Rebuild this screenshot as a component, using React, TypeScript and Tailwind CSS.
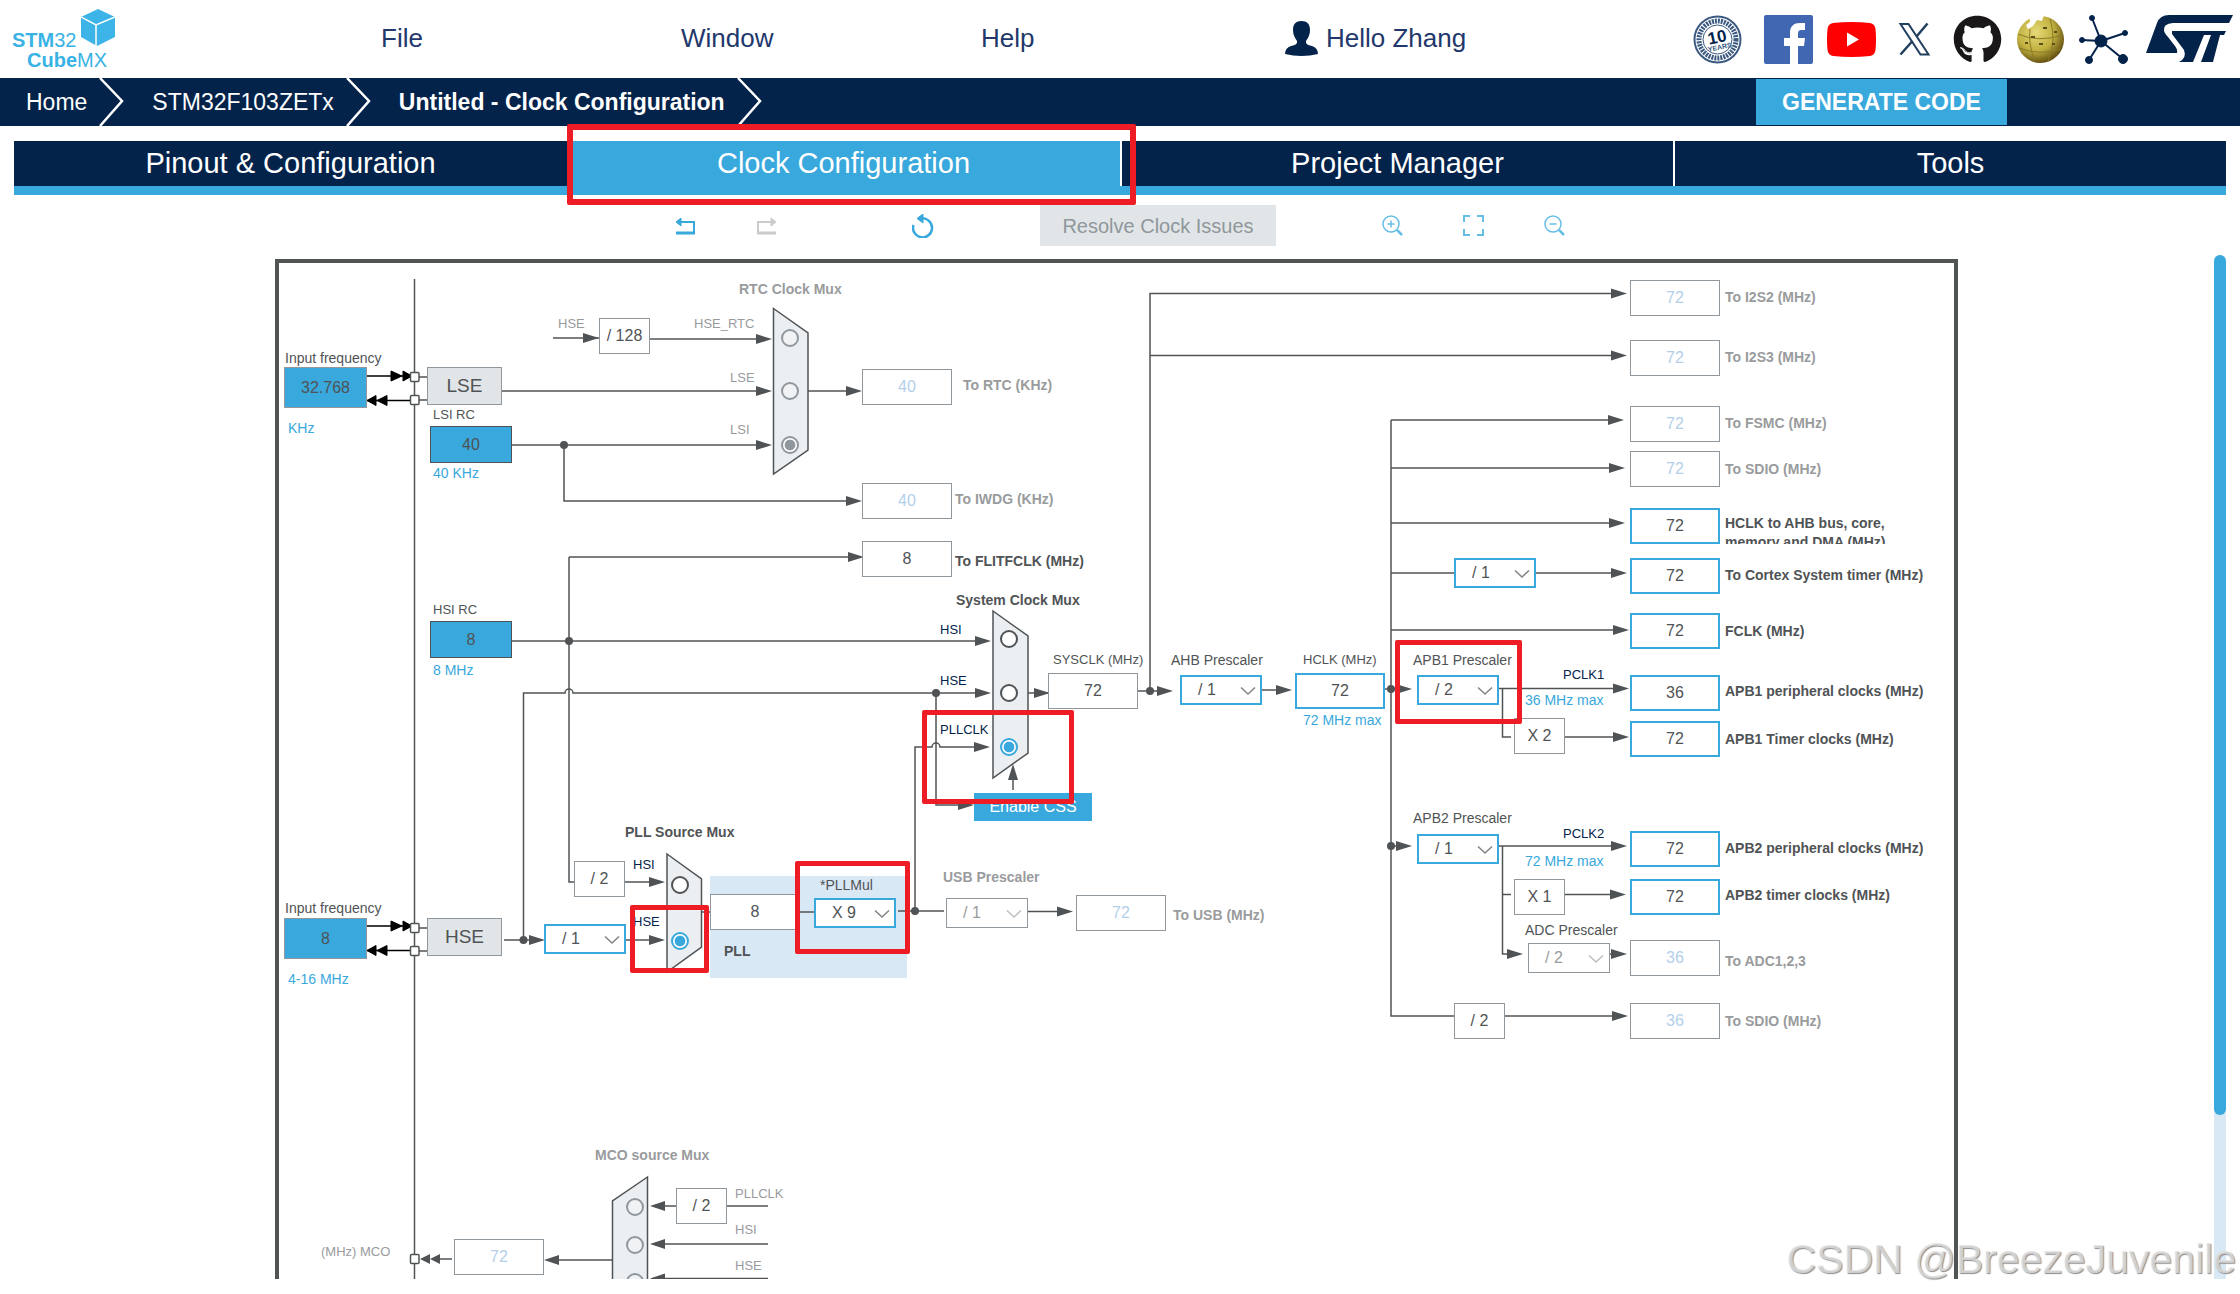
import { useState } from "react";
import { FaGithub } from "react-icons/fa";
import clsx from "clsx";

type Tone = "dark" | "muted" | "blue" | "navy";

interface TextNode {
  x: number;
  y: number; // vertical centre of the line
  text: string;
  tone?: Tone;
  bold?: boolean;
  small?: boolean;
  forId?: string;
}

interface ValueNode {
  id: string;
  x: number;
  y: number;
  value: string;
  kind: "active" | "plain" | "off";
  name: string;
}

interface SelectNode {
  id: string;
  x: number;
  y: number;
  value: string;
  options: string[];
  name: string;
  off?: boolean;
}

const toneClass: Record<Tone, string> = {
  dark: "text-[#505355]",
  muted: "text-[#999b9d]",
  blue: "text-[#39a8dc]",
  navy: "text-[#03234b]",
};

const DIVIDERS = ["/ 1", "/ 2", "/ 4", "/ 8", "/ 16"];

const outputs: (ValueNode & { labelY: number; label: string })[] = [
  { id: "i2s2", x: 1360, y: 30, value: "72", kind: "off", name: "I2S2", labelY: 47, label: "To I2S2 (MHz)" },
  { id: "i2s3", x: 1360, y: 90, value: "72", kind: "off", name: "I2S3", labelY: 107, label: "To I2S3 (MHz)" },
  { id: "fsmc", x: 1360, y: 156, value: "72", kind: "off", name: "FSMC", labelY: 173, label: "To FSMC (MHz)" },
  { id: "sdio", x: 1360, y: 201, value: "72", kind: "off", name: "SDIO", labelY: 219, label: "To SDIO (MHz)" },
  { id: "cortex", x: 1360, y: 308, value: "72", kind: "active", name: "Cortex", labelY: 325, label: "To Cortex System timer (MHz)" },
  { id: "fclk", x: 1360, y: 363, value: "72", kind: "active", name: "FCLK", labelY: 381, label: "FCLK (MHz)" },
  { id: "apb1p", x: 1360, y: 425, value: "36", kind: "active", name: "APB1", labelY: 441, label: "APB1 peripheral clocks (MHz)" },
  { id: "apb1t", x: 1360, y: 471, value: "72", kind: "active", name: "APB1 timer", labelY: 489, label: "APB1 Timer clocks (MHz)" },
  { id: "apb2p", x: 1360, y: 581, value: "72", kind: "active", name: "APB2", labelY: 598, label: "APB2 peripheral clocks (MHz)" },
  { id: "apb2t", x: 1360, y: 629, value: "72", kind: "active", name: "APB2 timer", labelY: 645, label: "APB2 timer clocks (MHz)" },
  { id: "adc", x: 1360, y: 690, value: "36", kind: "off", name: "ADC", labelY: 711, label: "To ADC1,2,3" },
  { id: "sdio2", x: 1360, y: 753, value: "36", kind: "off", name: "SDIO half", labelY: 771, label: "To SDIO (MHz)" },
];

const values: ValueNode[] = [
  { id: "rtc", x: 592, y: 119, value: "40", kind: "off", name: "RTC" },
  { id: "iwdg", x: 592, y: 233, value: "40", kind: "off", name: "IWDG" },
  { id: "flitf", x: 592, y: 291, value: "8", kind: "plain", name: "FLITFCLK" },
  { id: "sysclk", x: 778, y: 423, value: "72", kind: "plain", name: "SYSCLK" },
  { id: "hclk", x: 1025, y: 423, value: "72", kind: "active", name: "HCLK" },
  { id: "hclkbus", x: 1360, y: 258, value: "72", kind: "active", name: "HCLK bus" },
  { id: "vco", x: 440, y: 644, value: "8", kind: "plain", name: "PLL input" },
  { id: "usb", x: 806, y: 645, value: "72", kind: "off", name: "USB" },
  { id: "mco", x: 184, y: 989, value: "72", kind: "off", name: "MCO" },
];

const selects: SelectNode[] = [
  { id: "hsediv", x: 274, y: 674, value: "/ 1", options: DIVIDERS, name: "HSE divider" },
  { id: "pllmul", x: 544, y: 648, value: "X 9", options: ["X 2", "X 4", "X 8", "X 9", "X 16"], name: "PLLMul" },
  { id: "usbdiv", x: 676, y: 648, value: "/ 1", options: DIVIDERS, name: "USB Prescaler", off: true },
  { id: "ahb", x: 910, y: 425, value: "/ 1", options: DIVIDERS, name: "AHB Prescaler" },
  { id: "apb1", x: 1147, y: 425, value: "/ 2", options: DIVIDERS, name: "APB1 Prescaler" },
  { id: "apb2", x: 1147, y: 584, value: "/ 1", options: DIVIDERS, name: "APB2 Prescaler" },
  { id: "adcdiv", x: 1258, y: 693, value: "/ 2", options: DIVIDERS, name: "ADC Prescaler", off: true },
  { id: "cortexdiv", x: 1184, y: 308, value: "/ 1", options: DIVIDERS, name: "Cortex divider" },
];

const factors = [
  { x: 329, y: 68, text: "/ 128" },
  { x: 304, y: 611, text: "/ 2" },
  { x: 406, y: 938, text: "/ 2" },
  { x: 1244, y: 468, text: "X 2" },
  { x: 1244, y: 629, text: "X 1" },
  { x: 1184, y: 753, text: "/ 2" },
];

const sources = [
  { id: "lse", x: 14, y: 117, value: "32.768", wide: true },
  { id: "lsi", x: 160, y: 176, value: "40", wide: false },
  { id: "hsi", x: 160, y: 371, value: "8", wide: false },
  { id: "hse", x: 14, y: 668, value: "8", wide: true },
];

const texts: TextNode[] = [
  { x: 15, y: 108, text: "Input frequency", forId: "lse" },
  { x: 18, y: 178, text: "KHz", tone: "blue" },
  { x: 163, y: 165, text: "LSI RC", forId: "lsi", small: true },
  { x: 163, y: 223, text: "40 KHz", tone: "blue" },
  { x: 163, y: 360, text: "HSI RC", forId: "hsi", small: true },
  { x: 163, y: 420, text: "8 MHz", tone: "blue" },
  { x: 15, y: 658, text: "Input frequency", forId: "hse" },
  { x: 18, y: 729, text: "4-16 MHz", tone: "blue" },
  { x: 469, y: 39, text: "RTC Clock Mux", tone: "muted", bold: true },
  { x: 288, y: 74, text: "HSE", tone: "muted", small: true },
  { x: 424, y: 74, text: "HSE_RTC", tone: "muted", small: true },
  { x: 460, y: 128, text: "LSE", tone: "muted", small: true },
  { x: 460, y: 180, text: "LSI", tone: "muted", small: true },
  { x: 693, y: 135, text: "To RTC (KHz)", tone: "muted", bold: true, forId: "rtc" },
  { x: 685, y: 249, text: "To IWDG (KHz)", tone: "muted", bold: true, forId: "iwdg" },
  { x: 685, y: 311, text: "To FLITFCLK (MHz)", bold: true, forId: "flitf" },
  { x: 686, y: 350, text: "System Clock Mux", bold: true },
  { x: 670, y: 380, text: "HSI", tone: "navy", small: true },
  { x: 670, y: 431, text: "HSE", tone: "navy", small: true },
  { x: 670, y: 480, text: "PLLCLK", tone: "navy", small: true },
  { x: 783, y: 410, text: "SYSCLK (MHz)", forId: "sysclk", small: true },
  { x: 901, y: 410, text: "AHB Prescaler", forId: "ahb" },
  { x: 1033, y: 410, text: "HCLK (MHz)", forId: "hclk", small: true },
  { x: 1033, y: 470, text: "72 MHz max", tone: "blue" },
  { x: 1143, y: 410, text: "APB1 Prescaler", forId: "apb1" },
  { x: 1293, y: 425, text: "PCLK1", tone: "navy", small: true },
  { x: 1255, y: 450, text: "36 MHz max", tone: "blue" },
  { x: 1143, y: 568, text: "APB2 Prescaler", forId: "apb2" },
  { x: 1293, y: 584, text: "PCLK2", tone: "navy", small: true },
  { x: 1255, y: 611, text: "72 MHz max", tone: "blue" },
  { x: 1255, y: 680, text: "ADC Prescaler", forId: "adcdiv" },
  { x: 355, y: 582, text: "PLL Source Mux", bold: true },
  { x: 363, y: 615, text: "HSI", tone: "navy", small: true },
  { x: 363, y: 672, text: "HSE", tone: "navy", small: true },
  { x: 454, y: 701, text: "PLL", bold: true },
  { x: 550, y: 635, text: "*PLLMul", forId: "pllmul" },
  { x: 673, y: 627, text: "USB Prescaler", tone: "muted", bold: true, forId: "usbdiv" },
  { x: 903, y: 665, text: "To USB (MHz)", tone: "muted", bold: true, forId: "usb" },
  { x: 325, y: 905, text: "MCO source Mux", tone: "muted", bold: true },
  { x: 465, y: 944, text: "PLLCLK", tone: "muted", small: true },
  { x: 465, y: 980, text: "HSI", tone: "muted", small: true },
  { x: 465, y: 1016, text: "HSE", tone: "muted", small: true },
  { x: 51, y: 1002, text: "(MHz) MCO", tone: "muted", forId: "mco", small: true },
];

const radios = [
  { group: "rtcmux", name: "HSE_RTC", x: 520, y: 88, off: true },
  { group: "rtcmux", name: "LSE", x: 520, y: 141, off: true },
  { group: "rtcmux", name: "LSI", x: 520, y: 195, off: true, checked: true },
  { group: "sysmux", name: "HSI", x: 739, y: 389 },
  { group: "sysmux", name: "HSE", x: 739, y: 443 },
  { group: "sysmux", name: "PLLCLK", x: 739, y: 497, checked: true },
  { group: "pllmux", name: "HSI", x: 410, y: 635 },
  { group: "pllmux", name: "HSE", x: 410, y: 691, checked: true },
  { group: "mcomux", name: "PLLCLK", x: 365, y: 957, off: true },
  { group: "mcomux", name: "HSI", x: 365, y: 995, off: true },
  { group: "mcomux", name: "HSE", x: 365, y: 1032, off: true },
];

const wires = [
  "M144.5 29V1040",
  "M283 88H329",
  "M380 89H488",
  "M232 141H488",
  "M242 195H488",
  "M294 195V251H580",
  "M538 141H580",
  "M299 307H585",
  "M299 307V632H304",
  "M242 391H708",
  "M253.5 690V443H295a4 4 0 0 1 8 0H708",
  "M666 443V555H690",
  "M645 661V497H662a4 4 0 0 1 8 0H706",
  "M743 540V525",
  "M758 443H778",
  "M868 441H890",
  "M880 441V43.5H1345",
  "M880 105.5H1345",
  "M992 440H1010",
  "M1115 439H1130",
  "M1121 170V766H1184",
  "M1121 170H1342",
  "M1121 218H1342",
  "M1121 273H1342",
  "M1121 323H1345",
  "M1121 380H1346",
  "M1229 438.5H1346",
  "M1232.5 439V487H1241",
  "M1295 487H1346",
  "M1121 596H1130",
  "M1229 596H1346",
  "M1232.5 596V704H1240",
  "M1232.5 644.5H1241",
  "M1295 644.5H1344",
  "M1340 704H1346",
  "M1235 766H1346",
  "M234 690H264",
  "M356 690H382",
  "M355 632H382",
  "M431 662H440",
  "M530 662H544",
  "M628 661H674",
  "M758 661.5H790",
  "M498 956H457",
  "M406 956H392",
  "M498 994H392",
  "M498 1028.5H392",
  "M342 1010H286",
  "M182 1009H165",
  "M149 127H157M149 150H157M149 678H157M149 701H157",
];

const rightArrows: [number, number][] = [
  [329, 88], [502, 89], [502, 141], [502, 195], [592, 141], [592, 251], [594, 307],
  [721, 391], [721, 443], [720, 497], [704, 555], [780, 443], [903, 441], [1022, 440],
  [1142, 439], [1142, 596], [1357, 43.5], [1357, 105.5], [1354, 170], [1355, 218],
  [1355, 273], [1357, 323], [1359, 380], [1359, 438.5], [1359, 487], [1357, 596],
  [1356, 644.5], [1253, 704], [1357, 704], [1358, 766], [275, 690], [395, 690],
  [395, 632], [803, 661.5],
];

const leftArrows: [number, number][] = [[380, 956], [380, 994], [380, 1028.5], [274, 1010]];

const dots: [number, number][] = [
  [294, 195], [299, 391], [253.5, 690], [666, 443], [645, 661], [880, 441], [1121, 439], [1121, 596],
];

const marks = [
  { x: 652, y: 460, w: 152, h: 94 },
  { x: 360, y: 655, w: 79, h: 68 },
  { x: 525, y: 611, w: 115, h: 93 },
  { x: 1125, y: 390, w: 127, h: 84 },
];

function Wires() {
  return (
    <svg className="absolute inset-0 h-full w-full" aria-hidden="true">
      <rect x="440" y="626" width="197" height="102" fill="#d9e8f5" />
      <g fill="none" stroke="#505355" strokeWidth="1.5">
        {wires.map((d) => (
          <path key={d} d={d} />
        ))}
      </g>
      <g fill="#ebeff2" stroke="#505355" strokeWidth="1.5">
        <path d="M503.500 58.500L538 83V200L503.500 224Z" />
        <path d="M723 361L758 386V503L723 528Z" />
        <path d="M397 604L431.500 629V697L397 722Z" />
        <path d="M377.500 927L342.500 951V1050H377.500Z" />
      </g>
      <g fill="#505355">
        {rightArrows.map(([x, y]) => (
          <path key={`${x}-${y}`} d={`M${x} ${y}l-16 -5v10z`} />
        ))}
        {leftArrows.map(([x, y]) => (
          <path key={`${x}-${y}`} d={`M${x} ${y}l15 -5v10z`} />
        ))}
        <path d="M743 514l-5 16h10z" />
        <path d="M150 1009l10 -5v10zM160 1009l10 -5v10z" />
        {dots.map(([x, y]) => (
          <circle key={`${x}-${y}`} cx={x} cy={y} r="4" />
        ))}
      </g>
      {/* oscillator pins */}
      {[126, 676].map((y) => (
        <g key={y} fill="#000" stroke="#000">
          <path d={`M97 ${y}H142M97 ${y + 24.5}H142`} strokeWidth="1.500" />
          <path d={`M132 ${y}l-11 -5v10zM142 ${y}l-9 -5v10z`} />
          <path d={`M97 ${y + 24.5}l9 -5v10zM107 ${y + 24.5}l10 -5v10z`} />
        </g>
      ))}
      <g fill="#fff" stroke="#505355" strokeWidth="1.5">
        {[127, 150, 678, 701, 1009].map((y) => (
          <rect key={y} x="140.500" y={y - 4.5} width="8.500" height="9" rx="1" />
        ))}
      </g>
    </svg>
  );
}

function Value({ node }: { node: ValueNode }) {
  return (
    <input
      id={node.id}
      aria-label={node.name}
      readOnly
      value={node.value}
      style={{ left: node.x, top: node.y }}
      className={clsx(
        "absolute h-9 w-[90px] bg-white text-center text-base outline-none",
        node.kind === "active" && "border-2 border-[#39a8dc] text-[#505355]",
        node.kind === "plain" && "border border-[#90989e] text-[#505355]",
        node.kind === "off" && "border border-[#90989e] text-[#b4cfea]",
      )}
    />
  );
}

function Prescaler({ node }: { node: SelectNode }) {
  const [value, setValue] = useState(node.value);
  return (
    <div className="absolute h-[30px] w-[82px]" style={{ left: node.x, top: node.y }}>
      <select
        id={node.id}
        aria-label={node.name}
        value={value}
        onChange={(e) => setValue(e.target.value)}
        className={clsx(
          "h-full w-full appearance-none bg-white pl-4 text-base outline-none",
          node.off ? "border border-[#90989e] text-[#999b9d]" : "border-2 border-[#39a8dc] text-[#505355]",
        )}
      >
        {node.options.map((o) => (
          <option key={o}>{o}</option>
        ))}
      </select>
      <svg
        viewBox="0 0 16 10"
        className={clsx(
          "pointer-events-none absolute top-[11px] right-[6px] h-[10px] w-4",
          node.off ? "text-[#bcbfc1]" : "text-[#808487]",
        )}
        aria-hidden="true"
      >
        <path d="M1 1.500L8 8L15 1.500" fill="none" stroke="currentColor" strokeWidth="1.500" />
      </svg>
    </div>
  );
}

function Label({ node }: { node: TextNode }) {
  const className = clsx(
    "absolute leading-4 whitespace-nowrap",
    toneClass[node.tone ?? "dark"],
    node.bold && "font-bold",
    node.small ? "text-[13px]" : "text-sm",
  );
  const style = { left: node.x, top: node.y - 8 };
  if (node.forId) {
    return <label htmlFor={node.forId} className={className} style={style}>{node.text}</label>;
  }
  return <span className={className} style={style}>{node.text}</span>;
}

function ClockTree() {
  return (
    <div className="relative h-[1100px] w-[1690px] shrink-0">
      <div className="absolute top-[9px] right-[2px] bottom-0 left-[5px] border-4 border-[#505455]" />
      <Wires />
      {sources.map((s) => (
        <input
          key={s.id}
          id={s.id}
          defaultValue={s.value}
          style={{ left: s.x, top: s.y }}
          className={clsx(
            "absolute border bg-[#39a8dc] text-center text-base text-[#505355] outline-none",
            s.wide ? "h-[41px] w-[83px] border-[#90989e]" : "h-[37px] w-[82px] border-[#505355]",
          )}
        />
      ))}
      <button className="absolute top-[117px] left-[157px] h-[38px] w-[75px] border border-[#90989e] bg-[#e1e5e8] text-[19px] text-[#505355]">
        LSE
      </button>
      <button className="absolute top-[668px] left-[157px] h-[38px] w-[75px] border border-[#90989e] bg-[#e1e5e8] text-[19px] text-[#505355]">
        HSE
      </button>
      <button className="absolute top-[543px] left-[704px] h-[28px] w-[118px] bg-[#39a8dc] text-base text-white">
        Enable CSS
      </button>
      {factors.map((f) => (
        <div
          key={`${f.x}-${f.y}`}
          style={{ left: f.x, top: f.y }}
          className="absolute flex h-9 w-[51px] items-center justify-center border border-[#90989e] bg-white text-base text-[#505355]"
        >
          {f.text}
        </div>
      ))}
      {values.map((v) => (
        <Value key={v.id} node={v} />
      ))}
      {outputs.map((o) => (
        <div key={o.id}>
          <Value node={o} />
          <Label node={{ x: 1455, y: o.labelY, text: o.label, bold: true, tone: o.kind === "off" ? "muted" : "dark", forId: o.id }} />
        </div>
      ))}
      <label
        htmlFor="hclkbus"
        className="absolute top-[264px] left-[1455px] h-[30px] w-[180px] overflow-hidden text-sm leading-[19px] font-bold text-[#505355]"
      >
        HCLK to AHB bus, core, memory and DMA (MHz)
      </label>
      {selects.map((s) => (
        <Prescaler key={s.id} node={s} />
      ))}
      {texts.map((t) => (
        <Label key={`${t.x}-${t.y}`} node={t} />
      ))}
      {radios.map((r) => (
        <input
          key={`${r.group}-${r.name}`}
          type="radio"
          name={r.group}
          aria-label={`${r.group} ${r.name}`}
          defaultChecked={r.checked}
          style={{ left: r.x - 9, top: r.y - 9 }}
          className={clsx(
            "absolute size-[18px] appearance-none rounded-full border-2 checked:bg-radial checked:from-current checked:from-50% checked:to-white checked:to-58%",
            r.off
              ? "border-[#90989e] bg-[#f0f2f4] text-[#90989e]"
              : "border-[#505355] bg-white text-[#39a8dc] checked:border-[#39a8dc]",
          )}
        />
      ))}
      {marks.map((m) => (
        <div
          key={m.x}
          className="pointer-events-none absolute rounded-xs border-[5px] border-[#ee1c24]"
          style={{ left: m.x, top: m.y, width: m.w, height: m.h }}
        />
      ))}
    </div>
  );
}

function Logo() {
  return (
    <a href="#" className="relative block h-full w-[381px] text-xl leading-5 text-[#39b2e5]">
      <span className="absolute top-[30px] left-[12px]">
        <b>STM</b>32
      </span>
      <span className="absolute top-[50px] left-[27px]">
        <b>Cube</b>MX
      </span>
      <svg viewBox="0 0 34 37" className="absolute top-[9px] left-[81px] h-[37px] w-[34px]" aria-hidden="true">
        <path d="M17 0L34 8V28L16 37L0 28V8Z" fill="#3cb4e7" />
        <path d="M0 8L15 16L34 8M15 16V37" fill="none" stroke="#fff" strokeWidth="1.5" />
      </svg>
    </a>
  );
}

function SocialLinks() {
  return (
    <div className="flex items-center gap-[14px] pr-[7px]">
      <a href="#" aria-label="10 years" className="mr-2">
        <svg viewBox="0 0 49 49" className="size-[49px]">
          <circle cx="24.500" cy="24.500" r="23" fill="#fff" stroke="#3c5a80" strokeWidth="2" />
          <circle cx="24.500" cy="24.500" r="18.500" fill="none" stroke="#3c5a80" strokeWidth="5" strokeDasharray="2 1" />
          <circle cx="24.500" cy="24.500" r="14.500" fill="none" stroke="#3c5a80" strokeWidth="1" />
          <g transform="rotate(-12 24 24)">
            <text x="24.500" y="28" textAnchor="middle" fontSize="17" fontWeight="700" fill="#03234b">10</text>
            <text x="25" y="35" textAnchor="middle" fontSize="7" fontWeight="700" fill="#3c5a80">YEARS</text>
          </g>
        </svg>
      </a>
      <a href="#" aria-label="Facebook">
        <svg viewBox="0 0 49 49" className="size-[49px]">
          <rect width="49" height="49" rx="2" fill="#4267b2" />
          <path d="M26 49V31H20V23H26V18C26 11 30 8 36 8H41V15H37C35 15 34 16 34 19V23H41L40 31H34V49Z" fill="#fff" />
        </svg>
      </a>
      <a href="#" aria-label="YouTube">
        <svg viewBox="0 0 49 49" className="size-[49px]">
          <path d="M6 8Q24.500 6 43 8Q48 9 48.500 14Q49.500 24.500 48.500 35Q48 40 43 41Q24.500 43 6 41Q1 40 .5 35Q-.5 24.500 .5 14Q1 9 6 8Z" fill="#f00" />
          <path d="M20 17.500L32 24.500L20 31.500Z" fill="#fff" />
        </svg>
      </a>
      <a href="#" aria-label="X">
        <svg viewBox="0 0 49 49" className="size-[49px]" fill="none" stroke="#21405f">
          <path d="M10.500 9H18.500L38.500 39.500H30.500Z" strokeWidth="2" />
          <path d="M37.500 8.500L26.500 21.500M22.500 26L10.500 39.500" strokeWidth="2.500" />
        </svg>
      </a>
      <a href="#" aria-label="GitHub">
        <FaGithub className="size-[49px] text-[#191717]" />
      </a>
      <a href="#" aria-label="Wiki">
        <svg viewBox="0 0 49 49" className="size-[49px]">
          <defs>
            <radialGradient id="globe" cx="40%" cy="35%" r="65%">
              <stop offset="0" stopColor="#e6da78" />
              <stop offset=".6" stopColor="#c1b040" />
              <stop offset="1" stopColor="#675413" />
            </radialGradient>
          </defs>
          <circle cx="24.500" cy="24.500" r="23.500" fill="url(#globe)" />
          <path d="M13 0H28L26 6L21 5L17 11L12 14L10 10L14 7Z" fill="#fff" />
          <g fill="none" stroke="#8b7a26" strokeWidth="1">
            <path d="M2 19Q22 28 47 20M3 33Q24 41 45 34M14 14Q12 30 19 46M34 4Q41 25 32 46" />
          </g>
          <g fill="#5b5017">
            <path d="M15 21h4v2h-4zM27 12h4v2h-4zM38 16h3v2h-3zM9 27h3v2h-3zM23 28h4v2h-4zM36 28h3v2h-3z" />
          </g>
        </svg>
      </a>
      <a href="#" aria-label="Community">
        <svg viewBox="0 0 49 49" className="size-[49px]" fill="#03234b" stroke="#03234b">
          <path d="M22 26L13 3M22 26L46 18M22 26L3 25M22 26L10 45M22 26L44 44" strokeWidth="2" />
          <circle cx="22" cy="26" r="6" />
          <circle cx="13" cy="3" r="2.500" />
          <circle cx="46" cy="18" r="2.500" />
          <circle cx="3" cy="25" r="2.500" />
          <circle cx="10" cy="45" r="3.500" />
          <circle cx="44" cy="44" r="4.500" />
        </svg>
      </a>
      <a href="#" aria-label="ST" className="ml-1">
        <svg viewBox="0 0 87 48" className="h-12 w-[87px]" fill="#03234b">
          <path d="M23 0H87L83 8H27Q17 9 18 15Q18 18 22 22L29 31Q32 35 31 38H0L11 8Q14 0 23 0Z" />
          <path d="M26 16H80L78 20H74L67 47H55L65 20H58L47 47H33Q41 43 38 35L26 19Z" />
        </svg>
      </a>
    </div>
  );
}

function Header() {
  return (
    <header className="flex h-[78px] items-center text-[26px] text-[#22376b]">
      <Logo />
      <nav className="grid max-w-[1200px] flex-1 grid-cols-4 items-center pb-0.5">
        <a href="#">File</a>
        <a href="#">Window</a>
        <a href="#">Help</a>
        <a href="#" className="flex items-center gap-2 pl-1">
          <svg viewBox="0 0 33 35" className="h-[35px] w-[33px]" fill="#03234b" aria-hidden="true">
            <path d="M16.500 0C22 0 25 3 25 9C25 14 23 17 21 20Q20 24 27 25Q33 27 33 33Q25 35 16.500 35Q8 35 0 33Q0 27 6 25Q13 24 12 20C10 17 8 14 8 9C8 3 11 0 16.500 0Z" />
          </svg>
          Hello Zhang
        </a>
      </nav>
      <div className="ml-auto">
        <SocialLinks />
      </div>
    </header>
  );
}

function Chevron() {
  return (
    <svg viewBox="0 0 25 48" className="h-12 w-[25px]" aria-hidden="true">
      <path d="M1 0L23 23L1 48" fill="none" stroke="#fff" strokeWidth="2.500" />
    </svg>
  );
}

function Breadcrumb() {
  return (
    <div className="flex h-12 items-center bg-[#03234b] text-[23px] text-white">
      <a href="#" className="pr-3 pl-[26px]">Home</a>
      <Chevron />
      <a href="#" className="pr-3 pl-7">STM32F103ZETx</a>
      <Chevron />
      <a href="#" className="pr-3 pl-7 font-bold">Untitled - Clock Configuration</a>
      <Chevron />
      <button className="mr-[233px] ml-auto h-[46px] w-[251px] bg-[#39a8dc] font-bold">GENERATE CODE</button>
    </div>
  );
}

function Tabs() {
  return (
    <nav className="mx-[14px] mt-[15px] grid grid-cols-4 bg-[#39a8dc] pb-[9px] text-[29px] text-white">
      <button className="h-[45px] bg-[#03234b]">Pinout &amp; Configuration</button>
      <button className="relative z-10 h-[45px]">
        Clock Configuration
        <span className="pointer-events-none absolute -top-[17px] -right-[16px] -bottom-[19px] left-0 rounded-xs border-[6px] border-[#ee1c24]" />
      </button>
      <button className="h-[45px] border-l-2 border-white bg-[#03234b]">Project Manager</button>
      <button className="h-[45px] border-l-2 border-white bg-[#03234b]">Tools</button>
    </nav>
  );
}

function Toolbar() {
  return (
    <div className="mt-[10px] flex h-[41px] items-center justify-center text-[#39a8dc]">
      <button aria-label="Undo">
        <svg viewBox="0 0 21 18" className="h-[18px] w-[21px]" fill="none" stroke="currentColor">
          <path d="M4 5H19V16" strokeWidth="2" />
          <path d="M1 16H20" strokeWidth="3" />
          <path d="M1 5L6 1V9Z" fill="currentColor" />
        </svg>
      </button>
      <button aria-label="Redo" className="ml-[60px] text-[#c9cbcd]">
        <svg viewBox="0 0 21 18" className="h-[18px] w-[21px]" fill="none" stroke="currentColor">
          <path d="M17 5H2V16" strokeWidth="2" />
          <path d="M1 16H20" strokeWidth="3" />
          <path d="M20 5L15 1V9Z" fill="currentColor" />
        </svg>
      </button>
      <button aria-label="Reset" className="ml-[135px]">
        <svg viewBox="0 0 22 24" className="h-6 w-[22px]" fill="none" stroke="currentColor">
          <path d="M1.500 11A9.500 9.500 0 1 0 9 4.500" strokeWidth="2.500" />
          <path d="M11 0V9L5 4.500Z" fill="currentColor" />
        </svg>
      </button>
      <button className="ml-[106px] h-[41px] bg-[#e1e5e8] px-[22px] text-xl text-[#8f979b]">Resolve Clock Issues</button>
      <div className="ml-[106px] flex gap-[60px] text-[#66bde5]">
        <button aria-label="Zoom in">
          <svg viewBox="0 0 21 21" className="size-[21px]" fill="none" stroke="currentColor" strokeWidth="1.500">
            <circle cx="9" cy="9" r="8" />
            <path d="M9 5.500V12.500M5.500 9H12.500" />
            <path d="M15 15L20 20" strokeWidth="2.500" />
          </svg>
        </button>
        <button aria-label="Fit">
          <svg viewBox="0 0 21 21" className="size-[21px]" fill="none" stroke="currentColor" strokeWidth="2">
            <path d="M1 7V1H7M14 1H20V7M20 14V20H14M7 20H1V14" />
          </svg>
        </button>
        <button aria-label="Zoom out">
          <svg viewBox="0 0 21 21" className="size-[21px]" fill="none" stroke="currentColor" strokeWidth="1.500">
            <circle cx="9" cy="9" r="8" />
            <path d="M5.500 9H12.500" />
            <path d="M15 15L20 20" strokeWidth="2.500" />
          </svg>
        </button>
      </div>
    </div>
  );
}

export default function App() {
  return (
    <div className="relative flex h-screen flex-col overflow-hidden bg-white pb-[15px] font-['Liberation_Sans',Arial,sans-serif]">
      <Header />
      <Breadcrumb />
      <Tabs />
      <Toolbar />
      <main className="mx-[14px] mt-1 flex min-h-0 flex-1">
        <div className="flex min-w-0 flex-1 justify-center overflow-hidden pl-0.5">
          <ClockTree />
        </div>
        {/* scroll track */}
        <div className="mt-[5px] w-3 rounded-t-full bg-[#d9e8f5]">
          <div className="h-[84%] rounded-full bg-[#39a8dc]" />
        </div>
      </main>
      <p className="pointer-events-none absolute right-1 bottom-[13px] text-[41px] leading-[44px] text-[#e3e3e3]/80 [text-shadow:1px_1px_1px_#8c8c8c]">
        CSDN @BreezeJuvenile
      </p>
    </div>
  );
}
